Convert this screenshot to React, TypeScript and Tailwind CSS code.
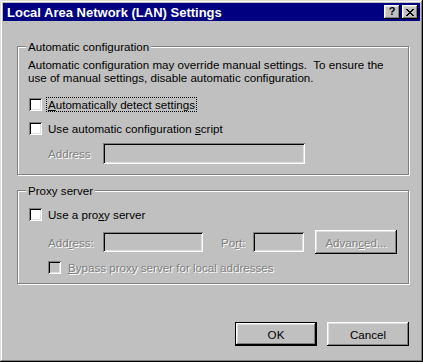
import React from "react";

const raised =
  "shadow-[inset_-1px_-1px_0_#000,inset_1px_1px_0_#fff,inset_-2px_-2px_0_#808080,inset_2px_2px_0_#dfdfdf]";
const sunken =
  "shadow-[inset_1px_1px_0_#808080,inset_-1px_-1px_0_#fff,inset_2px_2px_0_#000,inset_-2px_-2px_0_#dfdfdf]";
const disabled = "text-[#808080] [text-shadow:1px_1px_0_#fff]";

function Checkbox({ off }: { off?: boolean }) {
  return (
    <span
      className={`block w-[13px] h-[13px] shrink-0 ${sunken} ${off ? "bg-[#c0c0c0]" : "bg-white"}`}
    />
  );
}

function Field({ w, h = 21 }: { w: string; h?: number }) {
  return <span className={`block ${w} ${h === 21 ? "h-[21px]" : "h-[20px]"} bg-[#c0c0c0] ${sunken}`} />;
}

function Group({ title, children }: { title: string; children: React.ReactNode }) {
  return (
    <fieldset className="border border-[#808080] shadow-[inset_1px_1px_0_#fff,1px_1px_0_#fff]">
      <legend className="ml-[8px] px-[2px] bg-[#c0c0c0] leading-[13px]">{title}</legend>
      {children}
    </fieldset>
  );
}

export default function App() {
  return (
    <div className="w-[423px] h-[362px] bg-[#c0c0c0] p-[3px] flex flex-col font-['Liberation_Sans',Arial,sans-serif] text-[11.6px] leading-[13px] text-black shadow-[inset_-1px_-1px_0_#000,inset_1px_1px_0_#dfdfdf,inset_-2px_-2px_0_#808080,inset_2px_2px_0_#fff]">
      {/* title bar */}
      <div className="h-[18px] bg-[#000080] flex items-center pl-[4px] pr-[2px]">
        <span className="flex-1 text-white font-bold text-[13px] leading-[15px]">
          Local Area Network (LAN) Settings
        </span>
        <span className={`w-[16px] h-[14px] bg-[#c0c0c0] ${raised} flex items-center justify-center font-bold text-[11px] leading-none pb-[1px]`}>
          ?
        </span>
        <span className={`ml-[2px] w-[16px] h-[14px] bg-[#c0c0c0] ${raised} flex items-center justify-center`}>
          <svg width="8" height="7" viewBox="0 0 8 7" shapeRendering="crispEdges">
            <path d="M0 0h2v1h-2zM6 0h2v1h-2zM1 1h2v1h-2zM5 1h2v1h-2zM2 2h4v1h-4zM3 3h2v1h-2zM2 4h4v1h-4zM1 5h2v1h-2zM5 5h2v1h-2zM0 6h2v1h-2zM6 6h2v1h-2z" fill="#000" />
          </svg>
        </span>
      </div>

      <div className="flex-1 flex flex-col pl-[14px] pr-[11px] pt-[19px] pb-[13px]">
        <Group title="Automatic configuration">
          <div className="px-[10px] pt-[5px] pb-[10px]">
            <p>
              Automatic configuration may override manual settings.{"\u00a0"} To ensure the
              <br />
              use of manual settings, disable automatic configuration.
            </p>
            <div className="mt-[14px] flex items-center">
              <span className="ml-[1px]"><Checkbox /></span>
              <span className="ml-[5px] px-[1px] outline outline-1 outline-dotted outline-black">
                <u>A</u>utomatically detect settings
              </span>
            </div>
            <div className="mt-[11px] flex items-center">
              <span className="ml-[1px]"><Checkbox /></span>
              <span className="ml-[6px]">
                Use automatic configuration <u>s</u>cript
              </span>
            </div>
            <div className="mt-[8px] flex items-center pl-[20px]">
              <span className={`w-[55px] ${disabled}`}>Address</span>
              <Field w="w-[202px]" />
            </div>
          </div>
        </Group>

        <div className="mt-[9px]">
          <Group title="Proxy server">
            <div className="px-[10px] pt-[11px] pb-[9px]">
              <div className="flex items-center">
                <span className="ml-[1px]"><Checkbox /></span>
                <span className="ml-[6px]">
                  Use a pro<u>x</u>y server
                </span>
              </div>
              <div className="mt-[9px] flex items-center pl-[20px] h-[24px]">
                <span className={`w-[55px] ${disabled}`}>
                  Add<u>r</u>ess:
                </span>
                <Field w="w-[100px]" h={20} />
                <span className={`ml-[18px] w-[32px] ${disabled}`}>
                  Po<u>r</u>t:
                </span>
                <Field w="w-[51px]" h={20} />
                <span className={`ml-[11px] w-[82px] h-[24px] bg-[#c0c0c0] ${raised} flex items-center justify-center ${disabled}`}>
                  Advan<u>c</u>ed...
                </span>
              </div>
              <div className="mt-[7px] flex items-center pl-[20px]">
                <Checkbox off />
                <span className={`ml-[7px] ${disabled}`}>
                  <u>B</u>ypass proxy server for local addresses
                </span>
              </div>
            </div>
          </Group>
        </div>

        <div className="mt-auto flex justify-end gap-[10px]">
          <span className="w-[82px] h-[24px] border border-black flex">
            <span className={`flex-1 bg-[#c0c0c0] ${raised} flex items-center justify-center`}>OK</span>
          </span>
          <span className={`w-[82px] h-[24px] bg-[#c0c0c0] ${raised} flex items-center justify-center`}>
            Cancel
          </span>
        </div>
      </div>
    </div>
  );
}
